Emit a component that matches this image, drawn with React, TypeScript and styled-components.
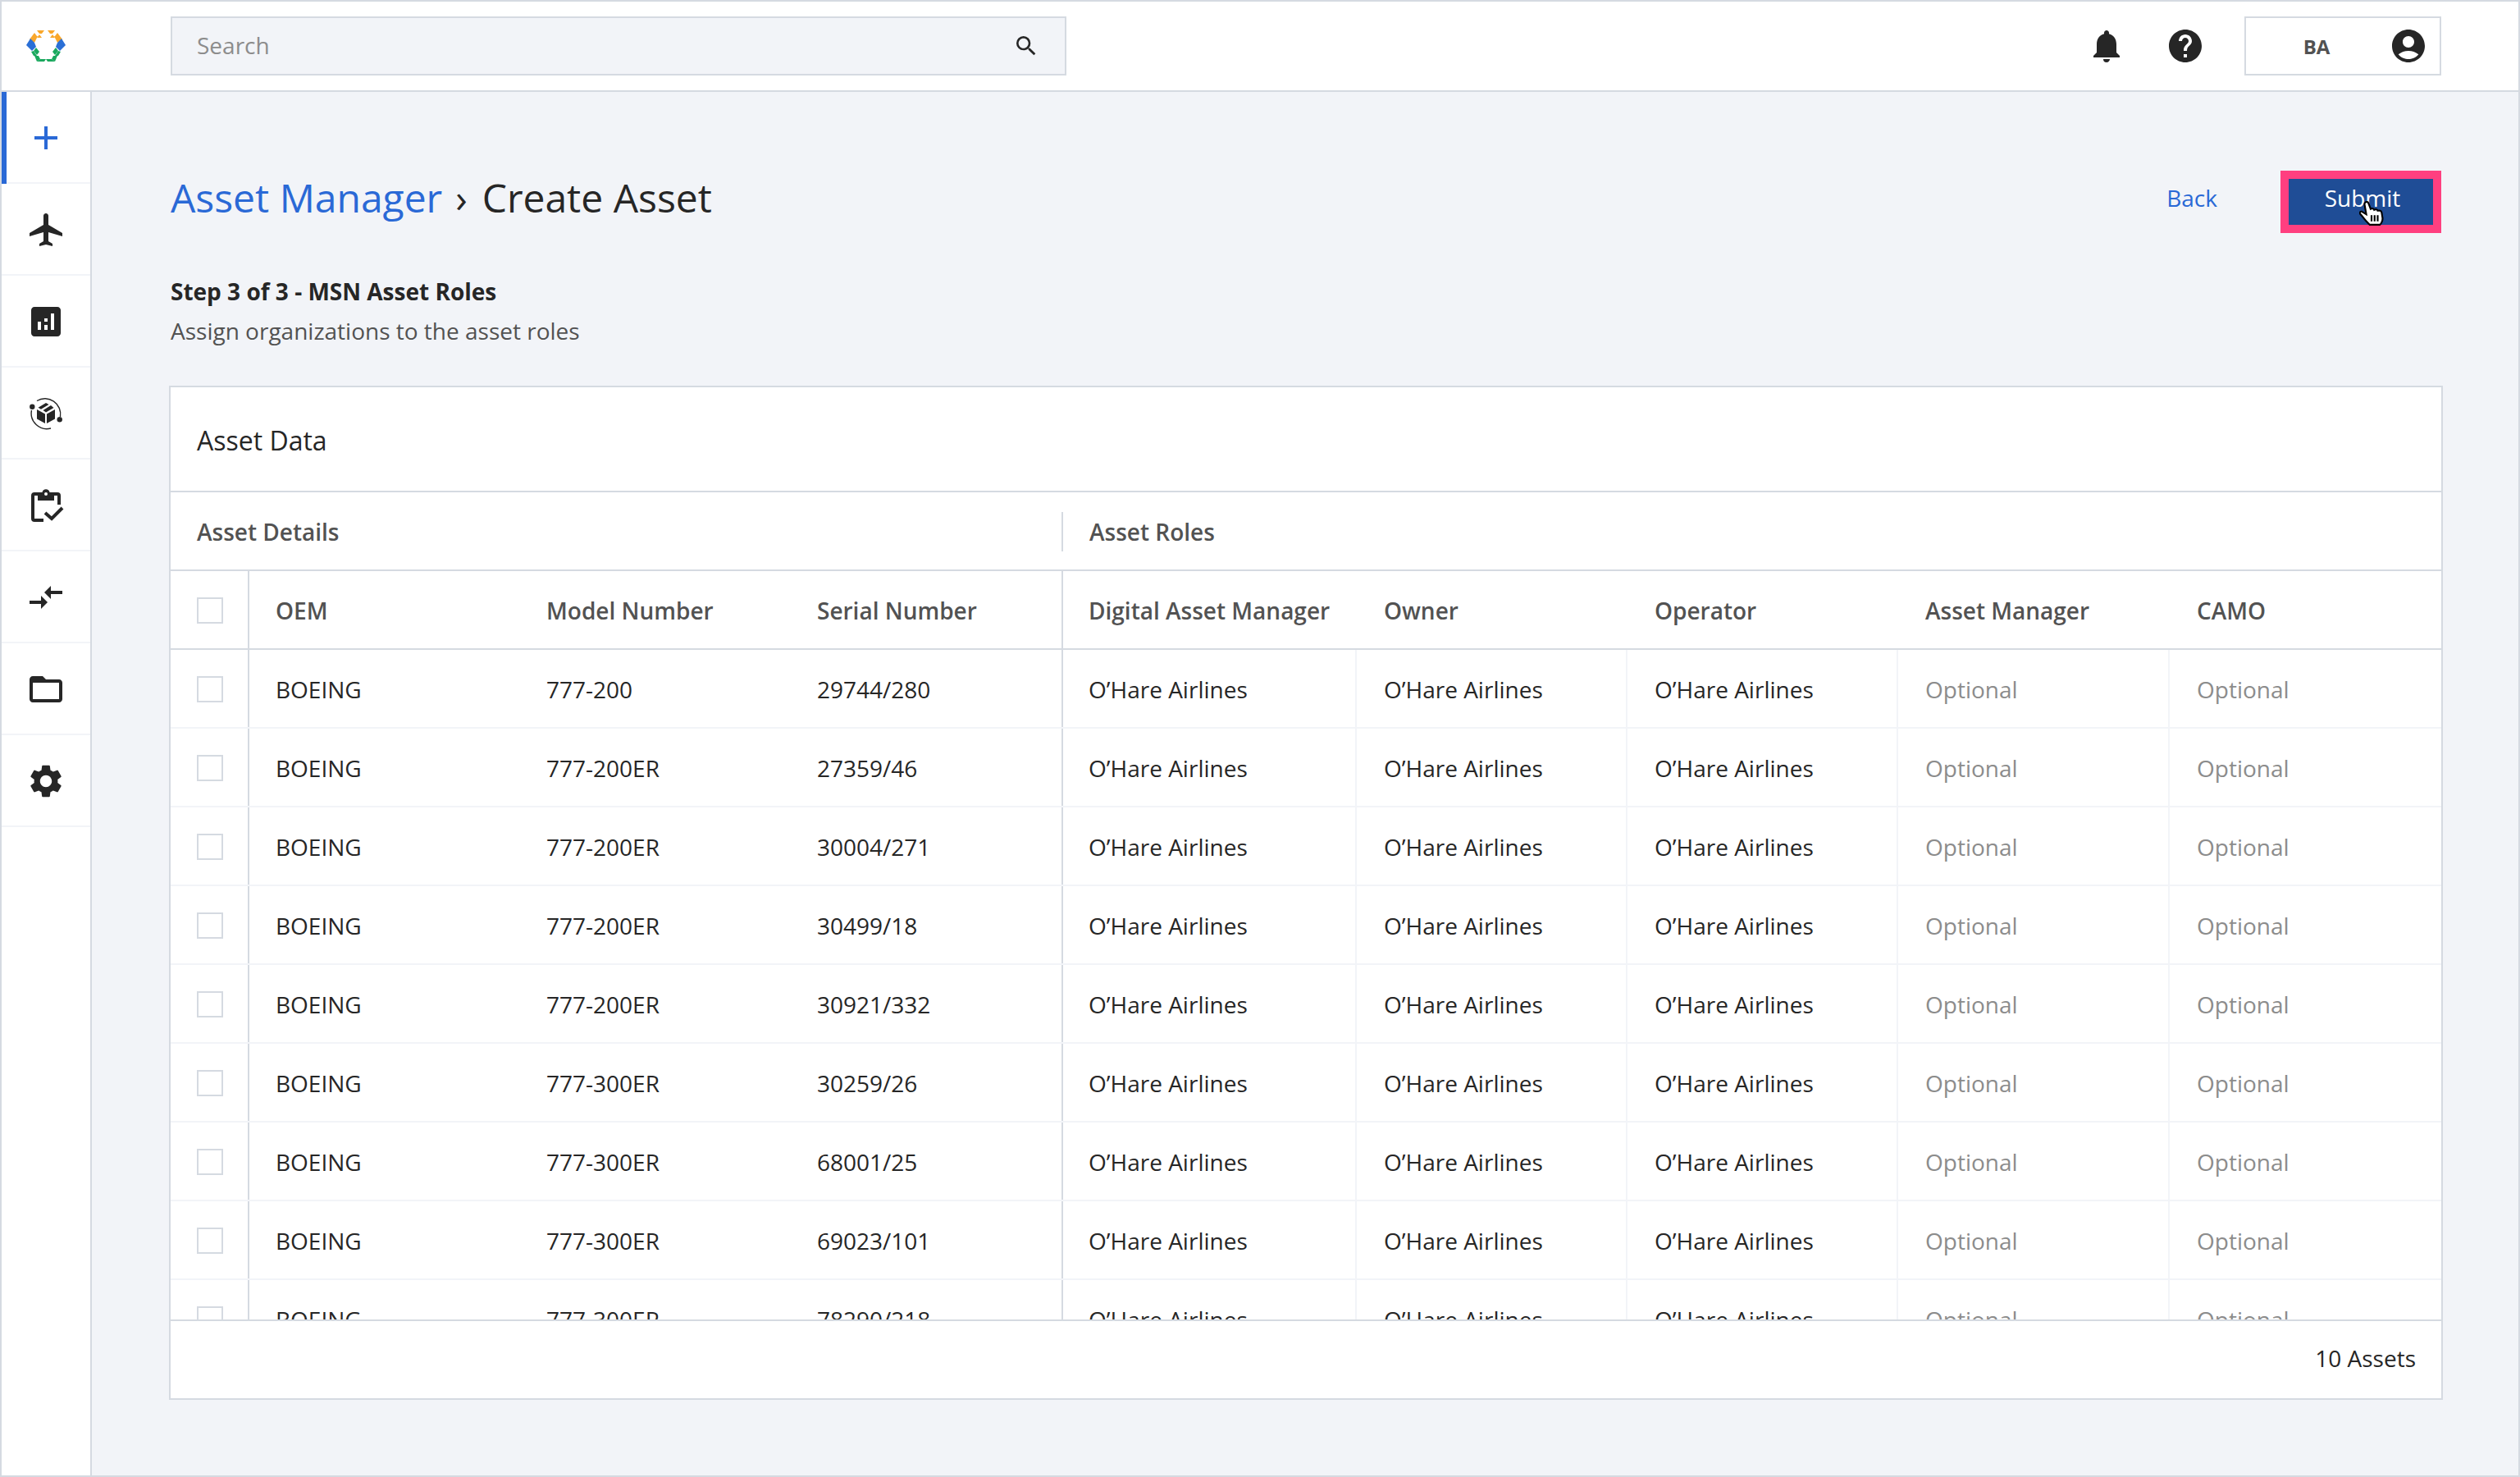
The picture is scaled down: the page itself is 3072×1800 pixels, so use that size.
import styled, { createGlobalStyle } from "styled-components";
import {
  MdAccountCircle,
  MdAdd,
  MdAirplanemodeActive,
  MdAnalytics,
  MdFolderOpen,
  MdHelp,
  MdNotifications,
  MdSearch,
  MdSettings,
} from "react-icons/md";

const line = "#d5dae1";
const lightLine = "#f2f4f8";
const blue = "#2a69d6";
const dark = "#262626";

const GlobalStyle = createGlobalStyle`
  html, body {
    margin: 0;
    padding: 0;
    background: #f2f4f8;
  }
  * {
    box-sizing: border-box;
  }
  body {
    font-family: "Open Sans", "Liberation Sans", sans-serif;
    font-size: 28px;
    color: ${dark};
  }
`;

const Frame = styled.div`
  width: 3072px;
  height: 1800px;
  display: flex;
  flex-direction: column;
  border: 2px solid ${line};
  overflow: hidden;
`;

const Header = styled.header`
  height: 110px;
  flex: none;
  display: flex;
  align-items: center;
  padding-right: 94px;
  background: #fff;
  border-bottom: 2px solid ${line};
`;

const LogoBox = styled.div`
  width: 206px;
  flex: none;
  display: flex;
  padding-left: 30px;
`;

const SearchBox = styled.div`
  width: 1092px;
  height: 72px;
  display: flex;
  align-items: center;
  justify-content: space-between;
  padding: 0 31px 0 30px;
  background: #f2f4f8;
  border: 2px solid ${line};
  color: #8c8c8c;
  svg {
    color: ${dark};
  }
`;

const SearchLabel = styled.span`
  margin-bottom: 2px;
`;

const HeaderActions = styled.div`
  margin-left: auto;
  display: flex;
  align-items: center;
  gap: 48px;
  color: ${dark};
`;

const UserBox = styled.div`
  width: 240px;
  height: 72px;
  display: flex;
  align-items: center;
  padding-right: 14px;
  border: 2px solid ${line};
`;

const UserName = styled.span`
  flex: 1;
  padding-right: 2px;
  text-align: center;
  font-size: 24px;
  font-weight: 700;
  color: #525252;
`;

const Body = styled.div`
  flex: 1;
  min-height: 0;
  display: flex;
`;

const Sidebar = styled.nav`
  width: 110px;
  flex: none;
  background: #fff;
  border-right: 2px solid ${line};
`;

const NavItem = styled.div<{ $active?: boolean }>`
  height: 112px;
  display: flex;
  align-items: center;
  justify-content: center;
  color: ${({ $active }) => ($active ? blue : dark)};
  box-shadow: ${({ $active }) => ($active ? `inset 6px 0 0 ${blue},` : "")} inset 0 -2px 0 ${lightLine};
`;

const Main = styled.main`
  flex: 1;
  min-width: 0;
  padding: 96px 94px 0 96px;
`;

const TitleRow = styled.div`
  height: 76px;
  display: flex;
  align-items: center;
  justify-content: space-between;
`;

const Title = styled.h1`
  margin: 0;
  padding-bottom: 12px;
  font-size: 48px;
  font-weight: 400;
`;

const Crumb = styled.span`
  color: ${blue};
`;

const Chevron = styled.span`
  margin: 0 18px 0 16px;
`;

const Actions = styled.div`
  display: flex;
  align-items: center;
  gap: 77px;
`;

const BackLink = styled.a`
  padding-bottom: 10px;
  color: ${blue};
`;

const SubmitButton = styled.div`
  position: relative;
  width: 196px;
  height: 76px;
  display: flex;
  align-items: center;
  justify-content: center;
  padding: 0 0 10px 4px;
  background: #1f4d96;
  border: 10px solid #ff3f80;
  color: #fff;
`;

const Pointer = styled.svg`
  position: absolute;
  left: 86px;
  top: 27px;
  width: 30px;
  height: 30px;
`;

const Heading = styled.div`
  margin-top: 47px;
  line-height: 48px;
`;

const StepTitle = styled.div`
  font-weight: 700;
`;

const StepHint = styled.div`
  color: #525252;
`;

const Card = styled.section`
  margin: 43px -2px 0;
  height: 1236px;
  display: flex;
  flex-direction: column;
  background: #fff;
  border: 2px solid ${line};
`;

const CardTitle = styled.div`
  height: 128px;
  flex: none;
  display: flex;
  align-items: center;
  padding: 2px 0 0 32px;
  font-size: 32px;
  border-bottom: 2px solid ${line};
`;

const GroupRow = styled.div`
  height: 96px;
  flex: none;
  display: flex;
  align-items: center;
  padding-top: 2px;
  font-weight: 600;
  color: #525252;
  border-bottom: 2px solid ${line};
`;

const GroupLabel = styled.div<{ $width?: number }>`
  width: ${({ $width }) => ($width ? `${$width}px` : "auto")};
  padding-left: 32px;
`;

const GroupDivider = styled.div`
  width: 2px;
  height: 48px;
  background: ${line};
`;

const Row = styled.div<{ $head?: boolean }>`
  height: 96px;
  flex: none;
  display: grid;
  grid-template-columns: 96px 330px 330px 332px 358px 330px 330px 331px 1fr;
  border-bottom: 2px solid ${({ $head }) => ($head ? line : lightLine)};
  font-weight: ${({ $head }) => ($head ? 600 : 400)};
  color: ${({ $head }) => ($head ? "#525252" : dark)};
`;

const Cell = styled.div<{
  $divider?: "strong" | "light";
  $muted?: boolean;
  $inset?: number;
}>`
  display: flex;
  align-items: center;
  padding: 2px 0 0 ${({ $inset }) => $inset ?? 32}px;
  white-space: nowrap;
  color: ${({ $muted }) => ($muted ? "#8c8c8c" : "inherit")};
  border-right: ${({ $divider }) =>
    $divider === "strong"
      ? `2px solid ${line}`
      : $divider === "light"
        ? `2px solid ${lightLine}`
        : "none"};
`;

const CheckBox = styled.div`
  width: 32px;
  height: 32px;
  background: #fff;
  border: 2px solid ${line};
`;

const TableBody = styled.div`
  flex: 1;
  min-height: 0;
  overflow: hidden;
`;

const Footer = styled.div`
  height: 96px;
  flex: none;
  display: flex;
  align-items: center;
  justify-content: flex-end;
  padding: 0 31px 4px 0;
  border-top: 2px solid ${line};
`;

const Logo = () => {
  const half = (
    <>
      <g fill="#f9a72b">
        <polygon points="13,0 22,0 19,4 16,4" />
        <polygon points="10,3 13,7 7,7" />
        <polygon points="16,5 19,9 13,9" />
        <polygon points="7,7 14,7 10,15 4,11" />
      </g>
      <g fill="#2a6fd6">
        <polygon points="5,10 10,15 12,20 7,25 0,18" />
      </g>
      <g fill="#1aa85e">
        <polygon points="12,21 16,26 13,30 9,25" />
        <polygon points="6,26 9,25 13,31 9,31" />
        <polygon points="10,31 15,31 17,35 13,38" />
        <polygon points="13,38 17,35 24,35 22,38" />
      </g>
    </>
  );
  return (
    <svg width="48" height="38" viewBox="0 0 48 38">
      {half}
      <g transform="translate(48 0) scale(-1 1)">{half}</g>
    </svg>
  );
};

const CargoIcon = () => (
  <svg width="48" height="48" viewBox="0 0 48 48" fill="none">
    <path d="M13 8.500A19 19 0 0 1 41.500 28" stroke={dark} strokeWidth="1.4" />
    <path d="M6.500 20A19 19 0 0 0 30 42" stroke={dark} strokeWidth="1.4" />
    <circle cx="7.300" cy="15.700" r="3.200" fill={dark} />
    <circle cx="40.700" cy="31.300" r="3.200" fill={dark} />
    <g fill={dark}>
      <polygon points="13,19 23,24.500 23,36 13,30.500" />
      <polygon points="25,24.500 35,19 35,30.500 25,36" />
      <polygon points="14.500,16.800 24,11 27.500,13 18,18.800" />
      <polygon points="20.500,20 30,14 33.500,17 24,22.500" />
    </g>
  </svg>
);

const ClipboardIcon = () => (
  <svg width="48" height="48" viewBox="0 0 48 48" fill="none">
    <path
      d="M14 10H10a2 2 0 0 0-2 2V40a2 2 0 0 0 2 2H21M34 10H38a2 2 0 0 1 2 2V23"
      stroke={dark}
      strokeWidth="4"
    />
    <path
      d="M14 8h5.500a4.600 4.600 0 0 1 9 0H34v10H14zM24 8a2 2 0 1 0 0 4 2 2 0 0 0 0-4z"
      fill={dark}
      fillRule="evenodd"
    />
    <path d="M23 33l8 7 13-13" stroke={dark} strokeWidth="4" />
  </svg>
);

const CompareIcon = () => (
  <svg width="48" height="48" viewBox="0 0 48 48" fill={dark}>
    <rect x="4" y="28" width="14" height="4" />
    <polygon points="18,22 26,30 18,38" />
    <rect x="30" y="16" width="14" height="4" />
    <polygon points="30,10 22,18 30,26" />
  </svg>
);

const rows = [
  ["777-200", "29744/280"],
  ["777-200ER", "27359/46"],
  ["777-200ER", "30004/271"],
  ["777-200ER", "30499/18"],
  ["777-200ER", "30921/332"],
  ["777-300ER", "30259/26"],
  ["777-300ER", "68001/25"],
  ["777-300ER", "69023/101"],
  ["777-300ER", "78290/218"],
];

const App = () => {
  return (
    <>
      <GlobalStyle />
      <Frame>
        <Header>
          <LogoBox>
            <Logo />
          </LogoBox>
          <SearchBox>
            <SearchLabel>Search</SearchLabel>
            <MdSearch size={32} />
          </SearchBox>
          <HeaderActions>
            <MdNotifications size={48} />
            <MdHelp size={48} />
            <UserBox>
              <UserName>BA</UserName>
              <MdAccountCircle size={48} />
            </UserBox>
          </HeaderActions>
        </Header>
        <Body>
          <Sidebar>
            <NavItem $active>
              <MdAdd size={48} />
            </NavItem>
            <NavItem>
              <MdAirplanemodeActive size={48} />
            </NavItem>
            <NavItem>
              <MdAnalytics size={48} />
            </NavItem>
            <NavItem>
              <CargoIcon />
            </NavItem>
            <NavItem>
              <ClipboardIcon />
            </NavItem>
            <NavItem>
              <CompareIcon />
            </NavItem>
            <NavItem>
              <MdFolderOpen size={48} />
            </NavItem>
            <NavItem>
              <MdSettings size={48} />
            </NavItem>
          </Sidebar>
          <Main>
            <TitleRow>
              <Title>
                <Crumb>Asset Manager</Crumb>
                <Chevron>›</Chevron>
                Create Asset
              </Title>
              <Actions>
                <BackLink>Back</BackLink>
                <SubmitButton>
                  Submit
                  <Pointer viewBox="0 0 28 28">
                    <path
                      d="M7 1.500C8.500.5 10 1 10.500 2.500L13 9c2-1 3.500-.5 4 1 2-1 3.500-.5 4 1 2-.5 4 0 4.500 2l1 6c.5 3-1.500 7-3 8H12c-2-2-5-5-8-9L1 14.500c-1-1.500.5-3 2-2.500l5 3L6 3.500c0-1 .2-1.500 1-2z"
                      fill="#fff"
                      stroke="#000"
                      strokeWidth="2"
                    />
                    <path d="M14 16v7M17.500 16v7M21 16v7" stroke="#000" strokeWidth="2" />
                  </Pointer>
                </SubmitButton>
              </Actions>
            </TitleRow>
            <Heading>
              <StepTitle>Step 3 of 3 - MSN Asset Roles</StepTitle>
              <StepHint>Assign organizations to the asset roles</StepHint>
            </Heading>
            <Card>
              <CardTitle>Asset Data</CardTitle>
              <GroupRow>
                <GroupLabel $width={1086}>Asset Details</GroupLabel>
                <GroupDivider />
                <GroupLabel>Asset Roles</GroupLabel>
              </GroupRow>
              <Row $head>
                <Cell $divider="strong">
                  <CheckBox />
                </Cell>
                <Cell>OEM</Cell>
                <Cell>Model Number</Cell>
                <Cell $divider="strong">Serial Number</Cell>
                <Cell $inset={31}>Digital Asset Manager</Cell>
                <Cell $inset={33}>Owner</Cell>
                <Cell $inset={33}>Operator</Cell>
                <Cell $inset={33}>Asset Manager</Cell>
                <Cell $inset={33}>CAMO</Cell>
              </Row>
              <TableBody>
                {rows.map(([model, serial]) => (
                  <Row key={serial}>
                    <Cell $divider="strong">
                      <CheckBox />
                    </Cell>
                    <Cell>BOEING</Cell>
                    <Cell>{model}</Cell>
                    <Cell $divider="strong">{serial}</Cell>
                    <Cell $divider="light" $inset={31}>
                      O’Hare Airlines
                    </Cell>
                    <Cell $divider="light" $inset={33}>
                      O’Hare Airlines
                    </Cell>
                    <Cell $divider="light" $inset={33}>
                      O’Hare Airlines
                    </Cell>
                    <Cell $divider="light" $muted $inset={33}>
                      Optional
                    </Cell>
                    <Cell $muted $inset={33}>
                      Optional
                    </Cell>
                  </Row>
                ))}
              </TableBody>
              <Footer>10 Assets</Footer>
            </Card>
          </Main>
        </Body>
      </Frame>
    </>
  );
};

export default App;
